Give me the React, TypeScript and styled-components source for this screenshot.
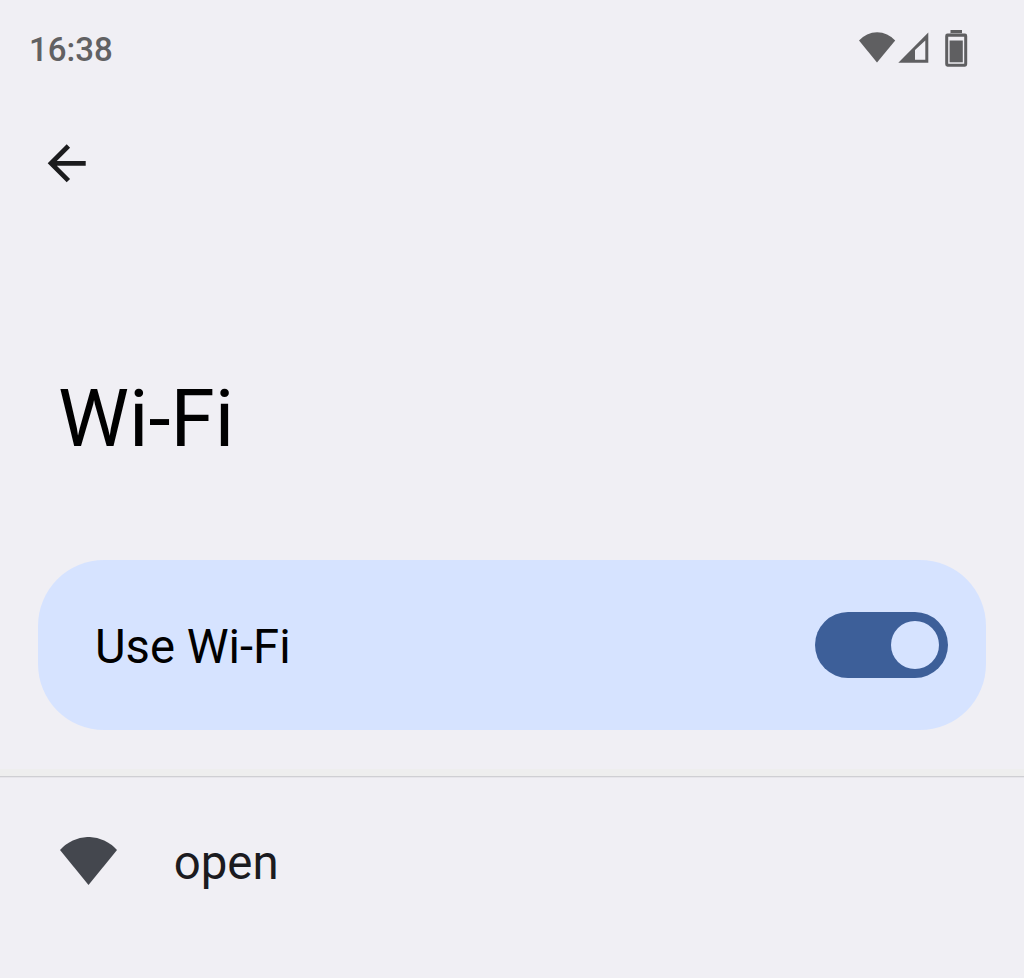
import React from 'react';
import styled, { createGlobalStyle } from 'styled-components';

const Global = createGlobalStyle`
  * { box-sizing: border-box; }
  body { margin: 0; background: #f0eff4; font-family: Roboto, sans-serif; }
`;
const Screen = styled.main`
  display: flex;
  flex-direction: column;
  width: 1024px;
  height: 978px;
  overflow: hidden;
  background: #f0eff4;
`;
const StatusBar = styled.header`
  display: flex;
  justify-content: space-between;
  height: 100px;
  padding: 29px 56px 0 29px;
`;
const Clock = styled.time`
  padding-top: 1px;
  color: #616163;
  font-size: 33px;
  line-height: 40px;
  font-weight: 500;
`;
const StatusIcons = styled.svg`
  display: block;
  width: 110px;
  height: 40px;
`;
const Toolbar = styled.nav`
  height: 128px;
  padding: 44px 0 0 47px;
`;
const BackButton = styled.button`
  display: block;
  padding: 0;
  border: 0;
  background: none;
  svg { display: block; }
`;
const Title = styled.h1`
  margin: 0;
  padding: 144px 0 0 58px;
  height: 332px;
  color: #000;
  font-size: 80px;
  line-height: 94px;
  font-weight: 400;
`;
const SwitchCard = styled.section`
  display: flex;
  flex: none;
  align-items: center;
  justify-content: space-between;
  height: 170px;
  margin: 0 38px;
  padding: 0 38px 0 57px;
  border-radius: 66px;
  background: #d6e3ff;
`;
const CardLabel = styled.span`
  padding-top: 3px;
  color: #000;
  font-size: 47.2px;
  line-height: 56px;
`;
const Switch = styled.div`
  display: flex;
  align-items: center;
  justify-content: flex-end;
  width: 133px;
  height: 66px;
  padding-right: 9px;
  border-radius: 33px;
  background: #3d5f99;
`;
const Thumb = styled.span`
  width: 48px;
  height: 48px;
  border-radius: 50%;
  background: #d6e3ff;
`;
const Divider = styled.div`
  flex: none;
  height: 8px;
  margin-top: 39px;
  background: #eeeeee;
  border-bottom: 1px solid #cfcfd3;
  box-shadow: 0 1px 0 #e6e5ea;
`;
const NetworkRow = styled.section`
  display: flex;
  align-items: center;
  height: 200px;
  padding: 0 59.7px 30px;
  svg { margin-bottom: 3px; }
`;
const NetworkName = styled.span`
  margin-left: 57px;
  padding-top: 1px;
  color: #1b1b1f;
  font-size: 47.4px;
  line-height: 56px;
`;

export default function App() {
  return (
    <Screen>
      <Global />
      <StatusBar>
        <Clock>16:38</Clock>
        <StatusIcons viewBox="858 29 110 40" fill="#5f5f61">
          <path d="M859 40.5A24 24 0 0 1 895.2 40.5L877 62.5Z" />
          <path fillRule="evenodd" d="M898.3 62.8L928.3 32.5V62.8ZM915 50V59.8H925.3V40.5Z" />
          <path fillRule="evenodd" d="M950.5 30H962V33.6H965Q967.2 33.6 967.2 36V64.3Q967.2 66.7 965 66.7H947.5Q945.2 66.7 945.2 64.3V36Q945.2 33.6 947.5 33.6H950.5ZM948.2 36.8V63.7H964.2V36.8Z" />
          <path d="M949.6 40.5H962.8V62.3H949.6Z" />
          <path d="M950.5 33H962V33.6H950.5Z" fill="#c4c4c8" />
        </StatusIcons>
      </StatusBar>
      <Toolbar>
        <BackButton aria-label="Back">
          <svg width="39" height="39" viewBox="3.7 3.87 16.421 16.421" fill="#1b1b1d">
            <path d="M20 11H7.83l5.59-5.59L12 4l-8 8 8 8 1.41-1.41L7.83 13H20v-2z" />
          </svg>
        </BackButton>
      </Toolbar>
      <Title>Wi-Fi</Title>
      <SwitchCard>
        <CardLabel>Use Wi-Fi</CardLabel>
        <Switch role="switch" aria-checked="true"><Thumb /></Switch>
      </SwitchCard>
      <Divider />
      <NetworkRow>
        <svg width="57" height="48" viewBox="0 0 57 48" fill="#44474e">
          <path d="M0 13A37.7 37.7 0 0 1 57 13L28.5 48Z" />
        </svg>
        <NetworkName>open</NetworkName>
      </NetworkRow>
    </Screen>
  );
}
